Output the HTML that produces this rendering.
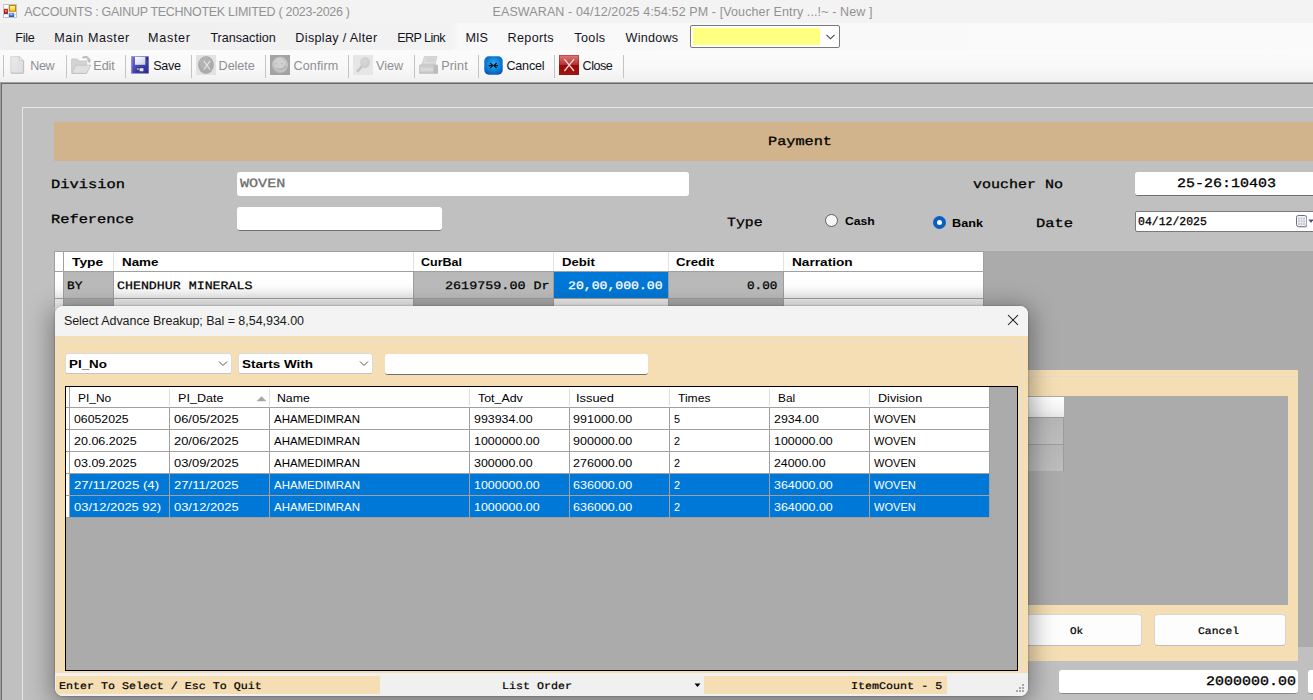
<!DOCTYPE html>
<html>
<head>
<meta charset="utf-8">
<title>Voucher Entry</title>
<style>
*{box-sizing:border-box;margin:0;padding:0}
html,body{width:1313px;height:700px;overflow:hidden;background:#c0c0c0;font-family:"Liberation Sans",sans-serif}
.a{position:absolute}
.t{position:absolute;white-space:nowrap;line-height:1;color:#000}
.sep{position:absolute;top:55px;width:1px;height:23px;background:#c4c4c4}
.gc{position:absolute;background:linear-gradient(#b7b7b7,#bfbfbf)}
.gc2{position:absolute;background:#adadad}
.wc2{position:absolute;background:#f1f1f1}
.wc{position:absolute;background:linear-gradient(#fff,#fff 55%,#efefef)}
.vl{position:absolute;width:1px;background:#a0a0a0}
.hl{position:absolute;height:1px;background:#a0a0a0}
</style>
</head>
<body>
<!-- window chrome -->
<div class="a" style="left:0;top:0;width:1313px;height:23px;background:#f3f3f3"></div>
<div class="a" style="left:0;top:23px;width:1313px;height:27px;background:linear-gradient(90deg,#efefef 0,#f2f2f2 34.3%,#f8f8f8 35%,#fafafa 100%)"></div>
<div class="a" style="left:0;top:50px;width:1313px;height:32px;background:linear-gradient(#fbfbfb 0%,#f9f9f9 50%,#f0f0f0 100%)"></div>
<div class="a" style="left:0;top:82px;width:1313px;height:1px;background:#a0a0a0"></div>
<div class="a" style="left:0;top:83px;width:1313px;height:1px;background:#696969"></div>
<div class="a" style="left:0;top:83px;width:1px;height:617px;background:#a0a0a0"></div>
<div class="a" style="left:1px;top:84px;width:1px;height:616px;background:#696969"></div>

<!-- app icon -->
<svg class="a" style="left:3px;top:4px" width="14" height="14" viewBox="0 0 14 14">
<defs><linearGradient id="iy" x1="0" y1="0" x2="0" y2="1"><stop offset="0" stop-color="#fff0a0"/><stop offset="1" stop-color="#ffc810"/></linearGradient>
<linearGradient id="ir" x1="0" y1="0" x2="0" y2="1"><stop offset="0" stop-color="#d82818"/><stop offset="1" stop-color="#8a0808"/></linearGradient>
<linearGradient id="ib" x1="0" y1="0" x2="0" y2="1"><stop offset="0" stop-color="#6a9cf0"/><stop offset="1" stop-color="#1c50b8"/></linearGradient></defs>
<rect x="0.5" y="0.5" width="13" height="13" fill="#fdfdfd" stroke="#c2c2c2" stroke-width="1"/>
<path d="M5.5 1 V13 M1 4.5 H6 M1 10.5 H13 M11.5 9 V13" stroke="#d4d4d4" stroke-width="0.8" fill="none"/>
<rect x="6" y="1" width="7" height="6.8" fill="#b88608"/>
<rect x="7" y="2" width="5" height="4.8" fill="url(#iy)"/>
<rect x="1" y="5" width="3.9" height="4.9" fill="url(#ir)"/>
<rect x="2" y="6" width="1.6" height="2.4" fill="#f08878"/>
<rect x="6" y="8.8" width="5" height="4.2" fill="url(#ib)"/>
<rect x="7" y="9.8" width="2.6" height="1.4" fill="#a8c8ff"/>
</svg>

<!-- menu combo -->
<div class="a" style="left:690px;top:25px;width:150px;height:23px;background:#fff;border:1px solid #7a7a7a;border-radius:2px"></div>
<div class="a" style="left:693px;top:28px;width:127px;height:17px;background:#ffff80"></div>
<svg class="a" style="left:825px;top:33px" width="11" height="8" viewBox="0 0 11 8"><path d="M1.5 1.8 L5.5 5.8 L9.5 1.8" fill="none" stroke="#444" stroke-width="1.1"/></svg>

<!-- toolbar separators -->
<div class="a" style="left:3px;top:55px;width:1px;height:22px;background:#c4c4c4"></div>
<div class="sep" style="left:66px"></div><div class="sep" style="left:125px"></div><div class="sep" style="left:191px"></div>
<div class="sep" style="left:265px"></div><div class="sep" style="left:348px"></div><div class="sep" style="left:414px"></div>
<div class="sep" style="left:478px"></div><div class="sep" style="left:554px"></div><div class="sep" style="left:623px"></div>

<!-- New -->
<svg class="a" style="left:10px;top:56px" width="15" height="18" viewBox="0 0 15 18">
<defs><linearGradient id="nw" x1="0" y1="0" x2="1" y2="1"><stop offset="0" stop-color="#eaeaea"/><stop offset="1" stop-color="#dcdcdc"/></linearGradient></defs>
<path d="M0.8 0.6 L9.4 0.6 L13.4 4.6 L13.4 17 L0.8 17 Z" fill="url(#nw)" stroke="#d2d2d2" stroke-width="0.9"/>
<path d="M9.4 0.6 L9.4 4.6 L13.4 4.6 Z" fill="#f0f0f0" stroke="#c8c8c8" stroke-width="0.8"/>
<path d="M1 17.2 L13.6 17.2 M13.6 5 L13.6 17.2" stroke="#c0c0c0" stroke-width="1.1" fill="none"/>
</svg>
<!-- Edit (open folder) -->
<svg class="a" style="left:71px;top:55px" width="21" height="19" viewBox="0 0 21 19">
<path d="M0.6 4 L6.5 4 L8 6 L15.6 6 L15.6 18 L0.6 18 Z" fill="#d3d3d3" stroke="#c6c6c6" stroke-width="0.8"/>
<path d="M5 10.2 L19.8 10.2 L15.6 18.4 L0.8 18.4 Z" fill="#e0e0e0" stroke="#c4c4c4" stroke-width="0.9"/>
<path d="M1 18.6 L15.6 18.6" stroke="#bdbdbd" stroke-width="0.9"/>
<path d="M11.5 3 C13.5 1.2 17.3 1.4 18 5.4" fill="none" stroke="#bdbdbd" stroke-width="2"/>
<path d="M15.6 4.6 L19.9 4.6 L18.6 8.6 Z" fill="#bdbdbd"/>
</svg>
<!-- Save -->
<svg class="a" style="left:131px;top:56px" width="18" height="18" viewBox="0 0 18 18">
<defs><linearGradient id="sv" x1="0" y1="0" x2="1" y2="1"><stop offset="0" stop-color="#7474dc"/><stop offset="0.5" stop-color="#4444b0"/><stop offset="1" stop-color="#26268a"/></linearGradient>
<linearGradient id="sl" x1="0" y1="0" x2="1" y2="1"><stop offset="0" stop-color="#ffffff"/><stop offset="1" stop-color="#c8cce8"/></linearGradient></defs>
<rect x="0.3" y="0.3" width="17.4" height="17.2" fill="url(#sv)"/>
<rect x="0.3" y="0.3" width="1.2" height="17.2" fill="#8c8ce4" opacity="0.7"/>
<rect x="4" y="0.9" width="10.3" height="7.9" fill="url(#sl)"/>
<rect x="15.4" y="1.6" width="1.6" height="1.8" fill="#1c1c70"/>
<rect x="5" y="11.4" width="8" height="5" fill="#3a3a88"/>
<rect x="8.6" y="12.2" width="3.8" height="3" fill="#e8e8f4"/>
<rect x="5.8" y="12.4" width="2" height="1.2" fill="#d8d8ec"/>
</svg>
<!-- Delete -->
<svg class="a" style="left:196px;top:55px" width="20" height="20" viewBox="0 0 20 20">
<rect width="20" height="20" fill="#e2e2e2"/>
<ellipse cx="10" cy="10" rx="7.9" ry="9" fill="#ababab"/>
<ellipse cx="9.2" cy="8" rx="5.6" ry="6.2" fill="#b3b3b3"/>
<path d="M7.8 5.9 L14.1 14.7 M14.1 5.9 L7.8 14.7" stroke="#e6e6e6" stroke-width="1.05" fill="none"/>
</svg>
<!-- Confirm -->
<svg class="a" style="left:270px;top:55px" width="20" height="20" viewBox="0 0 20 20">
<rect width="20" height="20" fill="#a3a3a3"/>
<circle cx="10" cy="9.8" r="8" fill="#c4c4c4"/>
<circle cx="9.6" cy="8.6" r="5.6" fill="#d0d0d0"/>
<circle cx="6.4" cy="8.8" r="0.75" fill="#adadad"/><circle cx="12.1" cy="8.8" r="0.75" fill="#adadad"/>
<path d="M6.5 12.8 Q11 16.6 16 10.8" stroke="#adadad" stroke-width="1.1" fill="none"/>
<path d="M2.6 11 Q3.6 16 8.6 17.4" stroke="#b4b4b4" stroke-width="1.2" fill="none"/>
</svg>
<!-- View -->
<svg class="a" style="left:353px;top:55px" width="20" height="20" viewBox="0 0 20 20">
<rect width="20" height="20" fill="#e6e6e6"/>
<path d="M9.4 11 L4.8 15.8" stroke="#c3c3c3" stroke-width="2.5" stroke-linecap="round"/>
<ellipse cx="12" cy="7.6" rx="4.9" ry="5.6" fill="#cecece"/>
<ellipse cx="11.4" cy="6.8" rx="3" ry="3.6" fill="#d4d4d4"/>
</svg>
<!-- Print -->
<svg class="a" style="left:418px;top:56px" width="21" height="18" viewBox="0 0 21 18">
<path d="M6.5 0.6 L19 0.6 L17 8.4 L4 8.4 Z" fill="#dcdcdc" stroke="#cacaca" stroke-width="0.8"/>
<path d="M8 2.8 L16.6 2.8 M7.4 4.8 L16 4.8" stroke="#cacaca" stroke-width="0.9"/>
<path d="M1 9.6 L3.4 7.8 L17.6 7.8 L20 9.6 L20 17.2 L1 17.2 Z" fill="#cbcbcb"/>
<rect x="2.4" y="11.6" width="12.6" height="3.6" fill="#d8d8d8"/>
<rect x="15.6" y="9.4" width="4.4" height="7.8" fill="#bcbcbc"/>
<path d="M1 17.2 L20 17.2" stroke="#b8b8b8" stroke-width="0.9"/>
</svg>
<!-- Cancel -->
<svg class="a" style="left:484px;top:56px" width="19" height="19" viewBox="0 0 19 19">
<defs><radialGradient id="cb" cx="0.5" cy="0.42" r="0.62"><stop offset="0" stop-color="#34aef4"/><stop offset="0.55" stop-color="#0d84dc"/><stop offset="1" stop-color="#0558b4"/></radialGradient></defs>
<rect x="0.3" y="0.3" width="18.4" height="18.4" rx="4.6" fill="url(#cb)"/>
<path d="M6.2 7 L8.8 9.6 L6.2 12.2 M12.6 7 L10 9.6 L12.6 12.2 M4.8 9.6 L8.4 9.6 M14 9.6 L10.4 9.6" stroke="#04101e" stroke-width="1.2" fill="none"/>
</svg>
<!-- Close -->
<svg class="a" style="left:559px;top:55px" width="20" height="20" viewBox="0 0 20 20">
<defs><linearGradient id="cr" x1="0" y1="0" x2="0" y2="1"><stop offset="0" stop-color="#e27c7c"/><stop offset="0.48" stop-color="#b83030"/><stop offset="0.52" stop-color="#980a0a"/><stop offset="1" stop-color="#a01414"/></linearGradient></defs>
<rect width="20" height="20" fill="url(#cr)"/>
<rect x="0.5" y="0.5" width="19" height="19" fill="none" stroke="#8a1a1a" stroke-width="0.8" opacity="0.55"/>
<path d="M5.4 4.2 L15 16 M15 4.2 L5.4 16" stroke="#f6dede" stroke-width="1.25" fill="none"/>
</svg>

<!-- child form panel -->
<div class="a" style="left:22px;top:107px;width:1300px;height:600px;border-left:1px solid #e6e6e6;border-top:1px solid #e6e6e6"></div>
<div class="a" style="left:54px;top:122px;width:1259px;height:39px;background:#d2b48c"></div>
<div class="a" style="left:237px;top:172px;width:452px;height:24px;background:#fff;border-radius:3px"></div>
<div class="a" style="left:237px;top:207px;width:205px;height:24px;background:#fff;border-radius:3px;border-bottom:1px solid #6f6f6f"></div>
<div class="a" style="left:1135px;top:172px;width:190px;height:24px;background:#fff;border-radius:3px;border-bottom:1px solid #6f6f6f"></div>
<div class="a" style="left:1135px;top:211px;width:190px;height:21px;background:#fff;border:1px solid #7a7a7a;border-radius:2px"></div>
<!-- radios -->
<div class="a" style="left:825px;top:214px;width:13px;height:13px;border-radius:50%;background:#f6f6f6;border:1px solid #5e5e5e"></div>
<div class="a" style="left:933px;top:216px;width:13px;height:13px;border-radius:50%;background:#fff;border:4.5px solid #0a5fc4"></div>
<!-- calendar icon -->
<svg class="a" style="left:1296px;top:215px" width="17" height="13" viewBox="0 0 17 13">
<rect x="0.5" y="0.5" width="10" height="11" rx="1.8" fill="#f4f4f8" stroke="#6e6e76" stroke-width="1"/>
<rect x="2" y="2.6" width="7" height="7.4" fill="#c6c6d8"/>
<path d="M4.3 2.6 V10 M6.7 2.6 V10 M2 5 H9 M2 7.5 H9" stroke="#f4f4f8" stroke-width="0.7"/>
<path d="M2.5 12 H10.5 V3" stroke="#a8a8b0" stroke-width="0.9" fill="none"/>
<path d="M12.3 4.6 L17.5 4.6 L15 8 Z" fill="#40588c"/>
</svg>

<!-- main grid -->
<div class="a" style="left:55px;top:251px;width:1258px;height:396px;background:#ababab"></div>
<div class="a" style="left:54px;top:251px;width:930px;height:56px;background:#a0a0a0"></div>
<div class="a" style="left:55px;top:252px;width:928px;height:19px;background:#fff"></div>
<div class="a" style="left:63px;top:252px;width:1px;height:19px;background:#a0a0a0"></div>
<div class="a" style="left:113px;top:252px;width:1px;height:19px;background:#e2e2e2"></div>
<div class="a" style="left:413px;top:252px;width:1px;height:19px;background:#e2e2e2"></div>
<div class="a" style="left:553px;top:252px;width:1px;height:19px;background:#e2e2e2"></div>
<div class="a" style="left:668px;top:252px;width:1px;height:19px;background:#e2e2e2"></div>
<div class="a" style="left:783px;top:252px;width:1px;height:19px;background:#e2e2e2"></div>
<!-- row1 -->
<div class="wc" style="left:55px;top:272px;width:8px;height:26px"></div>
<div class="gc" style="left:64px;top:272px;width:49px;height:26px"></div>
<div class="wc" style="left:114px;top:272px;width:299px;height:26px"></div>
<div class="gc" style="left:414px;top:272px;width:139px;height:26px"></div>
<div class="a" style="left:554px;top:272px;width:114px;height:26px;background:#0078d7"></div>
<div class="gc" style="left:669px;top:272px;width:114px;height:26px"></div>
<div class="wc" style="left:784px;top:272px;width:199px;height:26px"></div>
<!-- row2 (partly hidden) -->
<div class="wc2" style="left:55px;top:299px;width:8px;height:26px"></div>
<div class="gc2" style="left:64px;top:299px;width:49px;height:26px"></div>
<div class="wc2" style="left:114px;top:299px;width:299px;height:26px"></div>
<div class="gc2" style="left:414px;top:299px;width:139px;height:26px"></div>
<div class="wc2" style="left:554px;top:299px;width:114px;height:26px"></div>
<div class="gc2" style="left:669px;top:299px;width:114px;height:26px"></div>
<div class="wc2" style="left:784px;top:299px;width:199px;height:26px"></div>

<!-- right wheat panel (behind dialog) -->
<div class="a" style="left:1000px;top:370px;width:298px;height:291px;background:#f5deb3"></div>
<div class="a" style="left:1000px;top:376px;width:297px;height:285px;border-top:1px solid #e3dccb;border-right:1px solid #eee0c0"></div>
<div class="a" style="left:1000px;top:396px;width:288px;height:209px;background:#ababab"></div>
<div class="a" style="left:1000px;top:397px;width:64px;height:20px;background:linear-gradient(#fff,#f4f4f4 60%,#e6e6e6)"></div>
<div class="a" style="left:1000px;top:417px;width:64px;height:54px;background:#9c9c9c"></div>
<div class="a" style="left:1000px;top:418px;width:63px;height:26px;background:linear-gradient(#b6b6b6,#bdbdbd)"></div>
<div class="a" style="left:1000px;top:445px;width:63px;height:26px;background:linear-gradient(#b6b6b6,#bdbdbd)"></div>
<div class="a" style="left:1000px;top:614px;width:142px;height:32px;background:#fdfdfd;border:1px solid #d6d6d6;border-bottom-color:#bdbdbd;border-radius:4px"></div>
<div class="a" style="left:1154px;top:614px;width:132px;height:32px;background:#fdfdfd;border:1px solid #d6d6d6;border-bottom-color:#bdbdbd;border-radius:4px"></div>
<!-- bottom inputs -->
<div class="a" style="left:1059px;top:670px;width:239px;height:24px;background:#fff;border-radius:3px;border-bottom:1px solid #8a8a8a"></div>
<div class="a" style="left:1308px;top:670px;width:20px;height:24px;background:#fff;border-radius:3px;border-bottom:1px solid #8a8a8a"></div>

<!-- dialog -->
<div class="a" style="left:55px;top:306px;width:973px;height:390px;border-radius:8px;background:#f0f0f0;box-shadow:0 5px 24px 4px rgba(0,0,0,0.36),0 0 2px rgba(0,0,0,0.4);overflow:hidden">
  <div class="a" style="left:0;top:0;width:973px;height:30px;background:#f3f3f3"></div>
  <div class="a" style="left:0;top:30px;width:973px;height:337px;background:#f5deb3"></div>
  <div class="a" style="left:4px;top:35px;width:963px;height:340px;border:1px solid #e2dfd6;border-bottom:none"></div>
  <!-- status strip -->
  <div class="a" style="left:0;top:367px;width:973px;height:23px;background:#f0f0f0"></div>
  <div class="a" style="left:1px;top:370px;width:324px;height:18px;background:#f5deb3"></div>
  <div class="a" style="left:649px;top:370px;width:243px;height:18px;background:#f5deb3"></div>
</div>
<svg class="a" style="left:1007px;top:314px" width="12" height="12" viewBox="0 0 12 12"><path d="M1 1 L11 11 M11 1 L1 11" stroke="#111" stroke-width="1.05" fill="none"/></svg>
<!-- combos -->
<div class="a" style="left:65px;top:353px;width:167px;height:21px;background:#fff;border:1px solid #dadada;border-bottom-color:#c4c4c4;border-radius:3px"></div>
<div class="a" style="left:238px;top:353px;width:135px;height:21px;background:#fff;border:1px solid #dadada;border-bottom-color:#c4c4c4;border-radius:3px"></div>
<svg class="a" style="left:218px;top:360px" width="10" height="7" viewBox="0 0 10 7"><path d="M1 1.5 L5 5.5 L9 1.5" fill="none" stroke="#555" stroke-width="1"/></svg>
<svg class="a" style="left:359px;top:360px" width="10" height="7" viewBox="0 0 10 7"><path d="M1 1.5 L5 5.5 L9 1.5" fill="none" stroke="#555" stroke-width="1"/></svg>
<div class="a" style="left:385px;top:354px;width:263px;height:21px;background:#fff;border-radius:3px;border-bottom:1px solid #6f6f6f"></div>
<!-- list grid -->
<div class="a" style="left:65px;top:386px;width:953px;height:285px;background:#ababab;border:1px solid #000"></div>
<div class="a" style="left:66px;top:387px;width:924px;height:131px;background:#a0a0a0"></div>
<div class="a" style="left:66px;top:387px;width:923px;height:20px;background:#fff"></div>
<div class="a" style="left:66px;top:408px;width:923px;height:21px;background:#fff"></div>
<div class="a" style="left:66px;top:430px;width:923px;height:21px;background:#fff"></div>
<div class="a" style="left:66px;top:452px;width:923px;height:21px;background:#fff"></div>
<div class="a" style="left:69px;top:474px;width:920px;height:21px;background:#0078d7"></div>
<div class="a" style="left:69px;top:496px;width:920px;height:21px;background:#0078d7"></div>
<div class="a" style="left:66px;top:474px;width:3px;height:21px;background:#fff"></div>
<div class="a" style="left:66px;top:496px;width:3px;height:21px;background:#fff"></div>
<div class="a" style="left:69px;top:408px;width:1px;height:110px;background:#a0a0a0"></div>
<div class="a" style="left:69px;top:387px;width:1px;height:20px;background:#a0a0a0"></div>
<div class="a" style="left:169px;top:408px;width:1px;height:110px;background:#a0a0a0"></div>
<div class="a" style="left:169px;top:389px;width:1px;height:17px;background:#dedede"></div>
<div class="a" style="left:269px;top:408px;width:1px;height:110px;background:#a0a0a0"></div>
<div class="a" style="left:269px;top:389px;width:1px;height:17px;background:#dedede"></div>
<div class="a" style="left:469px;top:408px;width:1px;height:110px;background:#a0a0a0"></div>
<div class="a" style="left:469px;top:389px;width:1px;height:17px;background:#dedede"></div>
<div class="a" style="left:569px;top:408px;width:1px;height:110px;background:#a0a0a0"></div>
<div class="a" style="left:569px;top:389px;width:1px;height:17px;background:#dedede"></div>
<div class="a" style="left:669px;top:408px;width:1px;height:110px;background:#a0a0a0"></div>
<div class="a" style="left:669px;top:389px;width:1px;height:17px;background:#dedede"></div>
<div class="a" style="left:769px;top:408px;width:1px;height:110px;background:#a0a0a0"></div>
<div class="a" style="left:769px;top:389px;width:1px;height:17px;background:#dedede"></div>
<div class="a" style="left:869px;top:408px;width:1px;height:110px;background:#a0a0a0"></div>
<div class="a" style="left:869px;top:389px;width:1px;height:17px;background:#dedede"></div>
<svg class="a" style="left:256px;top:396px" width="11" height="6" viewBox="0 0 11 6"><path d="M0.5 5.2 L5.5 0.2 L10.5 5.2 Z" fill="#a8a8a8"/></svg>
<!-- status arrow + grip -->
<svg class="a" style="left:694px;top:683px" width="7" height="5" viewBox="0 0 7 5"><path d="M0.5 0.5 L6.5 0.5 L3.5 4 Z" fill="#000"/></svg>
<svg class="a" style="left:1014px;top:683px" width="12" height="12" viewBox="0 0 12 12" fill="#a6a6a6">
<rect x="8" y="1" width="2" height="2"/><rect x="5" y="4" width="2" height="2"/><rect x="8" y="4" width="2" height="2"/>
<rect x="2" y="7" width="2" height="2"/><rect x="5" y="7" width="2" height="2"/><rect x="8" y="7" width="2" height="2"/></svg>

<div class="t" style="left:24.30px;top:6px;font-size:12.5px;letter-spacing:-0.296px;color:#929292;">ACCOUNTS : GAINUP TECHNOTEK LIMITED ( 2023-2026 )</div>
<div class="t" style="left:492.50px;top:6px;font-size:12.5px;letter-spacing:0.113px;color:#929292;">EASWARAN - 04/12/2025 4:54:52 PM - [Voucher Entry ...!~ - New ]</div>
<div class="t" style="left:15.30px;top:32px;font-size:12.6px;letter-spacing:-0.296px;color:#14141c;">File</div>
<div class="t" style="left:54.30px;top:32px;font-size:12.6px;letter-spacing:0.561px;color:#14141c;">Main Master</div>
<div class="t" style="left:148.10px;top:32px;font-size:12.6px;letter-spacing:0.681px;color:#14141c;">Master</div>
<div class="t" style="left:210.40px;top:32px;font-size:12.6px;color:#14141c;">Transaction</div>
<div class="t" style="left:295.30px;top:32px;font-size:12.6px;letter-spacing:0.344px;color:#14141c;">Display / Alter</div>
<div class="t" style="left:397.20px;top:32px;font-size:12.6px;letter-spacing:-0.571px;color:#14141c;">ERP Link</div>
<div class="t" style="left:465.50px;top:32px;font-size:12.6px;letter-spacing:0.005px;color:#14141c;">MIS</div>
<div class="t" style="left:507.60px;top:32px;font-size:12.6px;letter-spacing:0.317px;color:#14141c;">Reports</div>
<div class="t" style="left:574.30px;top:32px;font-size:12.6px;letter-spacing:0.349px;color:#14141c;">Tools</div>
<div class="t" style="left:625.60px;top:32px;font-size:12.6px;letter-spacing:0.235px;color:#14141c;">Windows</div>
<div class="t" style="left:30.30px;top:60px;font-size:12.6px;letter-spacing:-0.399px;color:#8e8e92;">New</div>
<div class="t" style="left:93.30px;top:60px;font-size:12.6px;letter-spacing:-0.067px;color:#8e8e92;">Edit</div>
<div class="t" style="left:153.30px;top:60px;font-size:12.6px;letter-spacing:-0.334px;color:#14141c;">Save</div>
<div class="t" style="left:218.60px;top:60px;font-size:12.6px;letter-spacing:-0.040px;color:#8e8e92;">Delete</div>
<div class="t" style="left:293.50px;top:60px;font-size:12.6px;letter-spacing:0.101px;color:#8e8e92;">Confirm</div>
<div class="t" style="left:376.00px;top:60px;font-size:12.6px;letter-spacing:0.009px;color:#8e8e92;">View</div>
<div class="t" style="left:441.20px;top:60px;font-size:12.6px;letter-spacing:0.151px;color:#8e8e92;">Print</div>
<div class="t" style="left:506.40px;top:60px;font-size:12.6px;letter-spacing:-0.201px;color:#14141c;">Cancel</div>
<div class="t" style="left:582.60px;top:60px;font-size:12.6px;letter-spacing:-0.498px;color:#14141c;">Close</div>
<div class="t" style="left:768.49px;top:136px;font-size:12.6px;transform-origin:0 0;transform:scaleX(1.2095);font-family:'Liberation Mono', monospace;text-rendering:geometricPrecision;-webkit-text-stroke:0.28px;">Payment</div>
<div class="t" style="left:50.58px;top:179px;font-size:12.6px;transform-origin:0 0;transform:scaleX(1.2224);font-family:'Liberation Mono', monospace;text-rendering:geometricPrecision;-webkit-text-stroke:0.28px;">Division</div>
<div class="t" style="left:50.58px;top:214px;font-size:12.6px;transform-origin:0 0;transform:scaleX(1.2188);font-family:'Liberation Mono', monospace;text-rendering:geometricPrecision;-webkit-text-stroke:0.28px;">Reference</div>
<div class="t" style="left:240.40px;top:178px;font-size:12.6px;transform-origin:0 0;transform:scaleX(1.1980);font-family:'Liberation Mono', monospace;text-rendering:geometricPrecision;color:#6d6d6d;-webkit-text-stroke:0.28px;">WOVEN</div>
<div class="t" style="left:973.40px;top:179px;font-size:12.6px;transform-origin:0 0;transform:scaleX(1.1904);font-family:'Liberation Mono', monospace;text-rendering:geometricPrecision;-webkit-text-stroke:0.28px;">voucher No</div>
<div class="t" style="left:1176.70px;top:177px;font-size:13px;transform-origin:0 0;transform:scaleX(1.1528);font-family:'Liberation Mono', monospace;text-rendering:geometricPrecision;-webkit-text-stroke:0.29px;">25-26:10403</div>
<div class="t" style="left:726.60px;top:217px;font-size:12.6px;transform-origin:0 0;transform:scaleX(1.1762);font-family:'Liberation Mono', monospace;text-rendering:geometricPrecision;-webkit-text-stroke:0.28px;">Type</div>
<div class="t" style="left:844.50px;top:216px;font-size:11.2px;transform-origin:0 0;transform:scaleX(1.0900);font-weight:bold;">Cash</div>
<div class="t" style="left:952.20px;top:218px;font-size:11.2px;transform-origin:0 0;transform:scaleX(1.1303);font-weight:bold;">Bank</div>
<div class="t" style="left:1035.97px;top:218px;font-size:12.6px;transform-origin:0 0;transform:scaleX(1.2277);font-family:'Liberation Mono', monospace;text-rendering:geometricPrecision;-webkit-text-stroke:0.28px;">Date</div>
<div class="t" style="left:1137.70px;top:217px;font-size:11.8px;transform-origin:0 0;transform:scaleX(0.9715);font-family:'Liberation Mono', monospace;text-rendering:geometricPrecision;-webkit-text-stroke:0.26px;">04/12/2025</div>
<div class="t" style="left:72.00px;top:257px;font-size:11.2px;transform-origin:0 0;transform:scaleX(1.2371);font-weight:bold;">Type</div>
<div class="t" style="left:121.60px;top:257px;font-size:11.2px;transform-origin:0 0;transform:scaleX(1.1967);font-weight:bold;">Name</div>
<div class="t" style="left:421.30px;top:257px;font-size:11.2px;transform-origin:0 0;transform:scaleX(1.1185);font-weight:bold;">CurBal</div>
<div class="t" style="left:561.70px;top:257px;font-size:11.2px;transform-origin:0 0;transform:scaleX(1.1720);font-weight:bold;">Debit</div>
<div class="t" style="left:676.30px;top:257px;font-size:11.2px;transform-origin:0 0;transform:scaleX(1.1842);font-weight:bold;">Credit</div>
<div class="t" style="left:791.50px;top:257px;font-size:11.2px;transform-origin:0 0;transform:scaleX(1.2205);font-weight:bold;">Narration</div>
<div class="t" style="left:67.20px;top:282px;font-size:11.3px;transform-origin:0 0;transform:scaleX(1.1321);font-family:'Liberation Mono', monospace;text-rendering:geometricPrecision;-webkit-text-stroke:0.25px;">BY</div>
<div class="t" style="left:117.00px;top:282px;font-size:11.3px;transform-origin:0 0;transform:scaleX(1.1752);font-family:'Liberation Mono', monospace;text-rendering:geometricPrecision;-webkit-text-stroke:0.25px;">CHENDHUR MINERALS</div>
<div class="t" style="left:444.50px;top:282px;font-size:11.3px;transform-origin:0 0;transform:scaleX(1.1872);font-family:'Liberation Mono', monospace;text-rendering:geometricPrecision;-webkit-text-stroke:0.25px;">2619759.00 Dr</div>
<div class="t" style="left:567.60px;top:282px;font-size:11.3px;transform-origin:0 0;transform:scaleX(1.1634);font-family:'Liberation Mono', monospace;text-rendering:geometricPrecision;color:#fff;-webkit-text-stroke:0.25px;">20,00,000.00</div>
<div class="t" style="left:746.70px;top:282px;font-size:11.3px;transform-origin:0 0;transform:scaleX(1.1193);font-family:'Liberation Mono', monospace;text-rendering:geometricPrecision;-webkit-text-stroke:0.25px;">0.00</div>
<div class="t" style="left:63.90px;top:315px;font-size:12.5px;letter-spacing:-0.033px;color:#1a1a1a;">Select Advance Breakup; Bal = 8,54,934.00</div>
<div class="t" style="left:69.20px;top:359px;font-size:11.2px;transform-origin:0 0;transform:scaleX(1.1954);font-weight:bold;">PI_No</div>
<div class="t" style="left:242.00px;top:359px;font-size:11.2px;transform-origin:0 0;transform:scaleX(1.2062);font-weight:bold;">Starts With</div>
<div class="t" style="left:77.50px;top:393px;font-size:11.2px;transform-origin:0 0;transform:scaleX(1.0689);">PI_No</div>
<div class="t" style="left:177.60px;top:393px;font-size:11.2px;transform-origin:0 0;transform:scaleX(1.1243);">PI_Date</div>
<div class="t" style="left:277.20px;top:393px;font-size:11.2px;transform-origin:0 0;transform:scaleX(1.0972);">Name</div>
<div class="t" style="left:477.60px;top:393px;font-size:11.2px;transform-origin:0 0;transform:scaleX(1.1071);">Tot_Adv</div>
<div class="t" style="left:576.15px;top:393px;font-size:11.2px;transform-origin:0 0;transform:scaleX(1.1500);">Issued</div>
<div class="t" style="left:677.70px;top:393px;font-size:11.2px;transform-origin:0 0;transform:scaleX(1.0806);">Times</div>
<div class="t" style="left:777.60px;top:393px;font-size:11.2px;transform-origin:0 0;transform:scaleX(1.0584);">Bal</div>
<div class="t" style="left:877.60px;top:393px;font-size:11.2px;transform-origin:0 0;transform:scaleX(1.1272);">Division</div>
<div class="t" style="left:73.60px;top:414px;font-size:11.2px;transform-origin:0 0;transform:scaleX(1.0978);">06052025</div>
<div class="t" style="left:173.60px;top:414px;font-size:11.2px;transform-origin:0 0;transform:scaleX(1.1547);">06/05/2025</div>
<div class="t" style="left:273.60px;top:414px;font-size:11.2px;transform-origin:0 0;transform:scaleX(1.0247);">AHAMEDIMRAN</div>
<div class="t" style="left:473.50px;top:414px;font-size:11.2px;transform-origin:0 0;transform:scaleX(1.1090);">993934.00</div>
<div class="t" style="left:573.40px;top:414px;font-size:11.2px;transform-origin:0 0;transform:scaleX(1.1204);">991000.00</div>
<div class="t" style="left:673.60px;top:414px;font-size:11.2px;transform-origin:0 0;transform:scaleX(0.9667);">5</div>
<div class="t" style="left:773.50px;top:414px;font-size:11.2px;transform-origin:0 0;transform:scaleX(1.1090);">2934.00</div>
<div class="t" style="left:873.80px;top:414px;font-size:11.2px;transform-origin:0 0;transform:scaleX(0.9885);">WOVEN</div>
<div class="t" style="left:73.60px;top:436px;font-size:11.2px;transform-origin:0 0;transform:scaleX(1.1189);">20.06.2025</div>
<div class="t" style="left:173.60px;top:436px;font-size:11.2px;transform-origin:0 0;transform:scaleX(1.1547);">20/06/2025</div>
<div class="t" style="left:273.60px;top:436px;font-size:11.2px;transform-origin:0 0;transform:scaleX(1.0247);">AHAMEDIMRAN</div>
<div class="t" style="left:473.50px;top:436px;font-size:11.2px;transform-origin:0 0;transform:scaleX(1.1107);">1000000.00</div>
<div class="t" style="left:573.40px;top:436px;font-size:11.2px;transform-origin:0 0;transform:scaleX(1.1204);">900000.00</div>
<div class="t" style="left:673.60px;top:436px;font-size:11.2px;transform-origin:0 0;transform:scaleX(0.9667);">2</div>
<div class="t" style="left:773.50px;top:436px;font-size:11.2px;transform-origin:0 0;transform:scaleX(1.1109);">100000.00</div>
<div class="t" style="left:873.80px;top:436px;font-size:11.2px;transform-origin:0 0;transform:scaleX(0.9885);">WOVEN</div>
<div class="t" style="left:73.60px;top:458px;font-size:11.2px;transform-origin:0 0;transform:scaleX(1.1189);">03.09.2025</div>
<div class="t" style="left:173.60px;top:458px;font-size:11.2px;transform-origin:0 0;transform:scaleX(1.1547);">03/09/2025</div>
<div class="t" style="left:273.60px;top:458px;font-size:11.2px;transform-origin:0 0;transform:scaleX(1.0247);">AHAMEDIMRAN</div>
<div class="t" style="left:473.50px;top:458px;font-size:11.2px;transform-origin:0 0;transform:scaleX(1.1090);">300000.00</div>
<div class="t" style="left:573.40px;top:458px;font-size:11.2px;transform-origin:0 0;transform:scaleX(1.1204);">276000.00</div>
<div class="t" style="left:673.60px;top:458px;font-size:11.2px;transform-origin:0 0;transform:scaleX(0.9667);">2</div>
<div class="t" style="left:773.50px;top:458px;font-size:11.2px;transform-origin:0 0;transform:scaleX(1.1047);">24000.00</div>
<div class="t" style="left:873.80px;top:458px;font-size:11.2px;transform-origin:0 0;transform:scaleX(0.9885);">WOVEN</div>
<div class="t" style="left:73.60px;top:480px;font-size:11.2px;transform-origin:0 0;transform:scaleX(1.1826);color:#fff;">27/11/2025 (4)</div>
<div class="t" style="left:173.60px;top:480px;font-size:11.2px;transform-origin:0 0;transform:scaleX(1.1722);color:#fff;">27/11/2025</div>
<div class="t" style="left:273.60px;top:480px;font-size:11.2px;transform-origin:0 0;transform:scaleX(1.0247);color:#fff;">AHAMEDIMRAN</div>
<div class="t" style="left:473.50px;top:480px;font-size:11.2px;transform-origin:0 0;transform:scaleX(1.1107);color:#fff;">1000000.00</div>
<div class="t" style="left:573.40px;top:480px;font-size:11.2px;transform-origin:0 0;transform:scaleX(1.1204);color:#fff;">636000.00</div>
<div class="t" style="left:673.60px;top:480px;font-size:11.2px;transform-origin:0 0;transform:scaleX(0.9667);color:#fff;">2</div>
<div class="t" style="left:773.50px;top:480px;font-size:11.2px;transform-origin:0 0;transform:scaleX(1.1109);color:#fff;">364000.00</div>
<div class="t" style="left:873.80px;top:480px;font-size:11.2px;transform-origin:0 0;transform:scaleX(0.9885);color:#fff;">WOVEN</div>
<div class="t" style="left:73.60px;top:502px;font-size:11.2px;transform-origin:0 0;transform:scaleX(1.1569);color:#fff;">03/12/2025 92)</div>
<div class="t" style="left:173.60px;top:502px;font-size:11.2px;transform-origin:0 0;transform:scaleX(1.1547);color:#fff;">03/12/2025</div>
<div class="t" style="left:273.60px;top:502px;font-size:11.2px;transform-origin:0 0;transform:scaleX(1.0247);color:#fff;">AHAMEDIMRAN</div>
<div class="t" style="left:473.50px;top:502px;font-size:11.2px;transform-origin:0 0;transform:scaleX(1.1107);color:#fff;">1000000.00</div>
<div class="t" style="left:573.40px;top:502px;font-size:11.2px;transform-origin:0 0;transform:scaleX(1.1204);color:#fff;">636000.00</div>
<div class="t" style="left:673.60px;top:502px;font-size:11.2px;transform-origin:0 0;transform:scaleX(0.9667);color:#fff;">2</div>
<div class="t" style="left:773.50px;top:502px;font-size:11.2px;transform-origin:0 0;transform:scaleX(1.1109);color:#fff;">364000.00</div>
<div class="t" style="left:873.80px;top:502px;font-size:11.2px;transform-origin:0 0;transform:scaleX(0.9885);color:#fff;">WOVEN</div>
<div class="t" style="left:59.00px;top:683px;font-size:10.2px;transform-origin:0 0;transform:scaleX(1.1435);font-family:'Liberation Mono', monospace;text-rendering:geometricPrecision;-webkit-text-stroke:0.22px;">Enter To Select / Esc To Quit</div>
<div class="t" style="left:501.96px;top:683px;font-size:10.2px;transform-origin:0 0;transform:scaleX(1.1429);font-family:'Liberation Mono', monospace;text-rendering:geometricPrecision;-webkit-text-stroke:0.22px;">List Order</div>
<div class="t" style="left:851.45px;top:683px;font-size:10.2px;transform-origin:0 0;transform:scaleX(1.1472);font-family:'Liberation Mono', monospace;text-rendering:geometricPrecision;-webkit-text-stroke:0.22px;">ItemCount - 5</div>
<div class="t" style="left:1070.00px;top:628px;font-size:10.2px;transform-origin:0 0;transform:scaleX(1.0814);font-family:'Liberation Mono', monospace;text-rendering:geometricPrecision;-webkit-text-stroke:0.22px;">Ok</div>
<div class="t" style="left:1198.20px;top:628px;font-size:10.2px;transform-origin:0 0;transform:scaleX(1.1212);font-family:'Liberation Mono', monospace;text-rendering:geometricPrecision;-webkit-text-stroke:0.22px;">Cancel</div>
<div class="t" style="left:1205.50px;top:675px;font-size:13px;transform-origin:0 0;transform:scaleX(1.1527);font-family:'Liberation Mono', monospace;text-rendering:geometricPrecision;-webkit-text-stroke:0.29px;">2000000.00</div>
</body>
</html>
